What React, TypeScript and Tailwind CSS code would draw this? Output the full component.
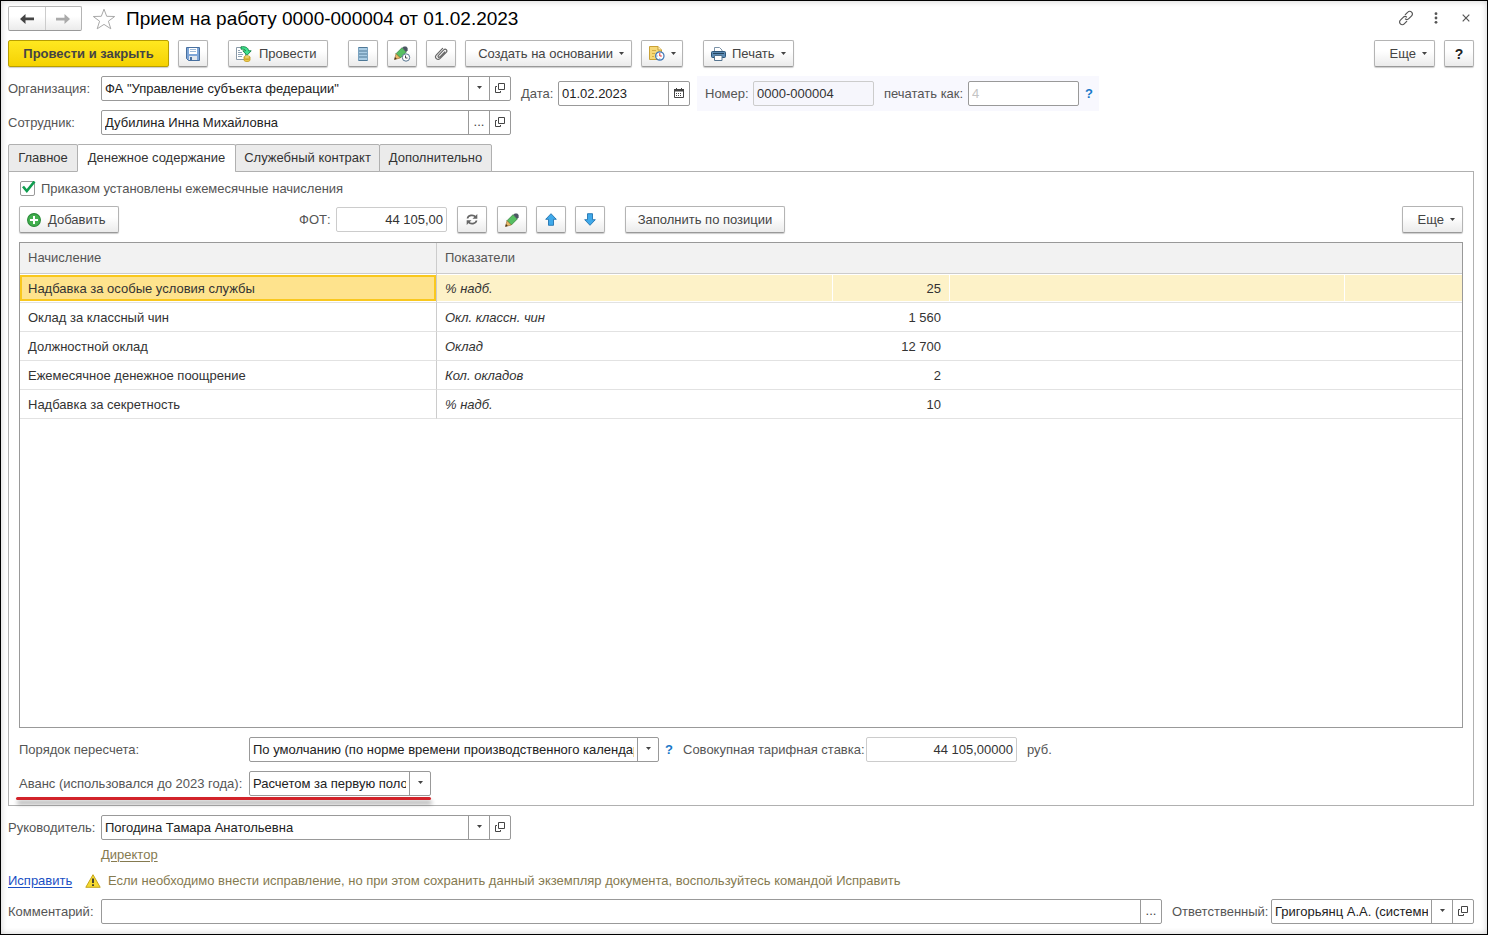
import { useState, type ReactNode } from "react";

const rows = [
  { name: "Надбавка за особые условия службы", indicator: "% надб.", value: "25" },
  { name: "Оклад за классный чин", indicator: "Окл. классн. чин", value: "1 560" },
  { name: "Должностной оклад", indicator: "Оклад", value: "12 700" },
  { name: "Ежемесячное денежное поощрение", indicator: "Кол. окладов", value: "2" },
  { name: "Надбавка за секретность", indicator: "% надб.", value: "10" },
];

const tabs = [
  { label: "Главное", width: "w-[70px]" },
  { label: "Денежное содержание", width: "w-[159px]" },
  { label: "Служебный контракт", width: "w-[145px]" },
  { label: "Дополнительно", width: "w-[113px]" },
];

/* Icons */

function Caret() {
  return (
    <svg width="5" height="3" viewBox="0 0 5 3" className="shrink-0">
      <path d="M0 0h5L2.5 3z" fill="#444" />
    </svg>
  );
}

function OpenIcon() {
  return (
    <svg width="10" height="10" viewBox="0 0 10 10" fill="none" stroke="#444">
      <path d="M3.5.5h6v6h-6z" />
      <path d="M2 3.5H.5v6h5V8" />
    </svg>
  );
}

function ArrowIcon({ color, flip }: { color: string; flip?: boolean }) {
  return (
    <svg width="14" height="10" viewBox="0 0 14 10" className={flip ? "rotate-180" : ""}>
      <path d="M5.5 0v3.6H14v2.6H5.5V10L0 5z" fill={color} />
    </svg>
  );
}

function StarIcon() {
  return (
    <svg width="24" height="22" viewBox="0 0 24 22" fill="#fff" stroke="#a9a9a9">
      <path d="M12 1.2l2.7 7.1 8 .2-6.3 4.7 2.4 7.6L12 16.4l-6.8 4.4 2.4-7.6L1.3 8.5l8-.2z" />
    </svg>
  );
}

function LinkIcon() {
  return (
    <svg width="16" height="16" viewBox="0 0 16 16" fill="none" stroke="#555" strokeWidth="1.2" strokeLinecap="round">
      <path d="M7.3 4.6l2.5-2.5a2.6 2.6 0 0 1 3.8 0 2.6 2.6 0 0 1 0 3.8L10.8 8.7a2.6 2.6 0 0 1-3.4.3" />
      <path d="M8.7 11.4l-2.5 2.5a2.6 2.6 0 0 1-3.8 0 2.6 2.6 0 0 1 0-3.8l2.8-2.8a2.6 2.6 0 0 1 3.4-.3" />
    </svg>
  );
}

function DotsIcon() {
  return (
    <svg width="4" height="12" viewBox="0 0 4 12" fill="#555">
      <circle cx="2" cy="1.7" r="1.4" />
      <circle cx="2" cy="6" r="1.4" />
      <circle cx="2" cy="10.3" r="1.4" />
    </svg>
  );
}

function CloseIcon() {
  return (
    <svg width="8" height="8" viewBox="0 0 8 8" stroke="#555" strokeWidth="1.2">
      <path d="M.7.7l6.6 6.6M7.3.7L.7 7.3" />
    </svg>
  );
}

function SaveIcon() {
  return (
    <svg width="14" height="14" viewBox="0 0 14 14">
      <path d="M.5.5h13v13h-11l-2-2z" fill="#7ea6d8" stroke="#476f9f" />
      <path d="M3 1h8v6H3z" fill="#fff" />
      <path d="M4 2.5h6M4 4.5h6" stroke="#9db9d8" />
      <path d="M3 9h8v4H3z" fill="#dfe6ee" />
      <path d="M4 10h2v3H4z" fill="#476f9f" />
    </svg>
  );
}

function PostIcon() {
  return (
    <svg width="16" height="16" viewBox="0 0 16 16">
      <path d="M.5 1.500h9v12h-9z" fill="#fff" stroke="#8a9aa8" />
      <path d="M2 4.500h2M2 6.500h4M2 8.500h5M2 10.500h4" stroke="#8fa3b5" />
      <path d="M5 .8c4.500-.6 7.200.8 7.600 4h2.600L11 9.300 6.800 4.800h2.700C9.200 3.400 7.800 3 5 3.200z" fill="#3fe08c" stroke="#128244" strokeWidth=".9" />
      <path d="M8 11v3c0 2 6 2 6 0v-3z" fill="#f2cf52" stroke="#c29a1d" strokeWidth=".8" />
      <ellipse cx="11" cy="11" rx="3" ry="1.2" fill="#fae48d" stroke="#c29a1d" strokeWidth=".8" />
      <path d="M8 12.700c.7 1.200 5.300 1.200 6 0" fill="none" stroke="#c29a1d" strokeWidth=".8" />
    </svg>
  );
}

function RegisterIcon() {
  return (
    <svg width="10" height="14" viewBox="0 0 10 14">
      <path d="M0 0h10v14H0z" fill="#a9cce4" />
      <path d="M0 .5h10M0 4h10M0 7h10M0 10h10M0 13.5h10" stroke="#4f7896" />
      <path d="M.5 0v14M9.5 0v14" stroke="#7ba3c0" />
    </svg>
  );
}

function PencilShape() {
  return (
    <>
      <path d="M8 1.700l4.300 4.300-6 6L2 7.700z" fill="#56bf62" stroke="#2c7a37" strokeWidth=".7" />
      <path d="M8.300 1.700L9.800.4h2.400l1.400 1.500v2.300l-1.500 1.700z" fill="#4b5563" />
      <path d="M2 7.700L6.300 12 .6 13.400z" fill="#e8b866" stroke="#94682a" strokeWidth=".6" />
      <path d="M.2 13.800l.8-2.700 1.900 1.900z" fill="#4a3520" />
    </>
  );
}

function PencilIcon() {
  return (
    <svg width="14" height="14" viewBox="0 0 14 14">
      <PencilShape />
    </svg>
  );
}

function PencilClockIcon() {
  return (
    <svg width="17" height="16" viewBox="0 0 17 16">
      <PencilShape />
      <circle cx="12" cy="11.500" r="3.700" fill="#fff" stroke="#55748f" />
      <path d="M11.500 9.500v2.500h2" fill="none" stroke="#444" />
    </svg>
  );
}

function ClipIcon() {
  return (
    <svg width="14" height="14" viewBox="0 0 14 14" fill="none" stroke="#666" strokeWidth="1.2" strokeLinecap="round">
      <path d="M10.8 5L6 9.800C4.700 11 3.300 9.600 4.500 8.300l5.200-5.400c1.900-1.800 4.200.5 2.500 2.400l-6 6.100c-2.700 2.600-6.300-.9-3.800-3.600L8.600 1.400" />
    </svg>
  );
}

function NoteClockIcon() {
  return (
    <svg width="16" height="15" viewBox="0 0 16 15">
      <path d="M.5.5H9L12.5 4v9.5H.5z" fill="#f6d877" stroke="#c9a136" />
      <path d="M9 .5V4h3.5" fill="#fff3c4" stroke="#c9a136" />
      <path d="M3 4.5h4M3 7.5h3M3 10.5h2" stroke="#d3ad46" />
      <circle cx="10.8" cy="10" r="4.2" fill="#fff" stroke="#3f76b5" strokeWidth="1.2" />
      <path d="M10.800 7v3h2" fill="none" stroke="#d33" />
      <path d="M10.800 12.500v1M7.500 10h1" stroke="#3f76b5" />
    </svg>
  );
}

function PrinterIcon() {
  return (
    <svg width="15" height="14" viewBox="0 0 15 14">
      <path d="M3.500 5V.5h5l2.500 2.500v2" fill="#fff" stroke="#7c93a8" />
      <rect x=".5" y="4.500" width="14" height="6" rx="1" fill="#5d8cb5" stroke="#2d5578" />
      <path d="M2 6.500h11" stroke="#24455f" />
      <path d="M3.500 8.500h7.500v5H3.500z" fill="#fff" stroke="#55748f" />
    </svg>
  );
}

function CalendarIcon() {
  return (
    <svg width="10" height="10" viewBox="0 0 10 10">
      <path d="M.5 1.500h9v8h-9z" fill="#fff" stroke="#444" />
      <path d="M0 1h10v2.500H0z" fill="#444" />
      <path d="M2.500 0v2M7.500 0v2" stroke="#444" />
      <path d="M2 5.500h6M2 7.500h6" stroke="#444" strokeDasharray="1 1" />
    </svg>
  );
}

function PlusIcon() {
  return (
    <svg width="14" height="14" viewBox="0 0 14 14">
      <circle cx="7" cy="7" r="6.4" fill="#43b04f" stroke="#2a8a38" strokeWidth="1.1" />
      <path d="M7 3v8M3 7h8" stroke="#fff" strokeWidth="2" />
    </svg>
  );
}

function RefreshIcon() {
  return (
    <svg width="12" height="11" viewBox="0 0 12 11" fill="none" stroke="#666" strokeWidth="1.7">
      <path d="M1.5 4.5C2 1 7.5.2 9.5 3" />
      <path d="M10.5 6.5C10 10 4.5 10.8 2.5 8" />
      <path d="M11.3 0v4.8H6.5z" fill="#666" stroke="none" />
      <path d="M.7 11V6.2h4.8z" fill="#666" stroke="none" />
    </svg>
  );
}

function MoveIcon({ down }: { down?: boolean }) {
  return (
    <svg width="12" height="13" viewBox="0 0 12 13" className={down ? "rotate-180" : ""}>
      <path d="M6 .7l5.300 5.600H8.500v6h-5v-6H.7z" fill="#3fa9ea" stroke="#2274b0" strokeWidth=".9" />
    </svg>
  );
}

function WarningIcon() {
  return (
    <svg width="16" height="14" viewBox="0 0 16 14">
      <path d="M8 .7l7.200 12.600H.8z" fill="#f5d92f" stroke="#c4a51c" strokeLinejoin="round" />
      <path d="M8 4.500V9M8 10.200v1.700" stroke="#333" strokeWidth="1.8" />
    </svg>
  );
}

/* Controls */

interface ButtonProps {
  width: string;
  label?: string;
  title?: string;
  icon?: ReactNode;
  menu?: boolean;
  primary?: boolean;
}

function Button({ width, label, title, icon, menu, primary }: ButtonProps) {
  const look = primary
    ? "border-[#b89f00] bg-linear-to-b from-[#ffe81f] to-[#f5d200] font-bold text-[#444]"
    : "border-[#b4b4b4] border-b-[#999] bg-linear-to-b from-white from-40% to-[#ebebeb] text-[#444]";
  // labelled buttons keep their content near the left edge, like the icon column of a menu
  const align = icon && label ? "justify-start pl-[7px]" : menu && !icon ? "justify-end pr-[7px]" : "justify-center";
  return (
    <button
      type="button"
      title={title}
      aria-label={label ?? title}
      className={`flex h-[27px] shrink-0 items-center rounded-xs border shadow-[0_1px_1px_#0003] whitespace-nowrap ${width} ${look} ${align} ${menu ? "gap-[6px]" : "gap-[7px]"}`}
    >
      {icon}
      {label}
      {menu && <Caret />}
    </button>
  );
}

function Cell({ title, children }: { title: string; children: ReactNode }) {
  return (
    <button type="button" aria-label={title} className="flex w-[21px] shrink-0 items-center justify-center border-l border-[#999] pb-[2px] text-[#444]">
      {children}
    </button>
  );
}

const frame = "flex h-[25px] min-w-0 rounded-xs border border-[#999] bg-white text-[#222]";

interface FieldProps {
  id: string;
  value: string;
  width: string;
  children?: ReactNode;
}

function SelectField({ id, value, width, children }: FieldProps) {
  return (
    <div className={`${frame} ${width}`}>
      <select id={id} className="min-w-0 flex-1 appearance-none overflow-hidden bg-transparent px-[3px] outline-none">
        <option>{value}</option>
      </select>
      <span className="pointer-events-none flex w-[21px] shrink-0 items-center justify-center border-l border-[#999] pb-[2px]">
        <Caret />
      </span>
      {children}
    </div>
  );
}

function TextField({ id, value, width, children }: FieldProps) {
  return (
    <div className={`${frame} ${width}`}>
      <input id={id} defaultValue={value} className="min-w-0 flex-1 bg-transparent px-[3px] outline-none" />
      {children}
    </div>
  );
}

function Hint() {
  return (
    <button type="button" aria-label="Подсказка" className="w-5 shrink-0 text-center font-bold text-[#1a78c8]">
      ?
    </button>
  );
}

function AccrualTable() {
  return (
    <div className="min-h-[200px] flex-1 border border-[#999] bg-white">
      <table className="w-full table-fixed border-separate border-spacing-0 text-left text-[#333]">
        <colgroup>
          <col className="w-[417px]" />
          <col />
          <col className="w-[117px]" />
          <col />
          <col className="w-[118px]" />
        </colgroup>
        <thead>
          <tr className="h-[31px] bg-[#f2f2f2] text-[#555]">
            <th className="border-r border-b border-[#ccc] px-2 font-normal">Начисление</th>
            <th colSpan={4} className="border-b border-[#ccc] px-2 font-normal">Показатели</th>
          </tr>
        </thead>
        <tbody>
          {rows.map((row, i) => {
            const active = i === 0;
            const fill = active ? "bg-[#fdf2c8]" : "";
            const cell = "border-b border-b-[#e2e2e2] p-0";
            const box = "flex h-[26px] items-center pt-[2px]";
            return (
              <tr key={row.name} className="h-[29px]">
                <td className={`${cell} border-r border-r-[#ccc]`}>
                  <div className={`${box} ${active ? "border-2 border-[#f9c81e] bg-[#fee38d] px-[6px]" : "px-2"}`}>
                    {row.name}
                  </div>
                </td>
                <td className={cell}>
                  <div className={`${box} px-2 italic ${fill}`}>{row.indicator}</div>
                </td>
                <td className={cell}>
                  <div className={`${box} justify-end pr-2 ${fill} ${active ? "border-l border-white" : ""}`}>{row.value}</div>
                </td>
                <td className={cell}>
                  <div className={`h-[26px] ${fill} ${active ? "border-l border-white" : ""}`} />
                </td>
                <td className={cell}>
                  <div className={`h-[26px] ${fill} ${active ? "border-l border-white" : ""}`} />
                </td>
              </tr>
            );
          })}
        </tbody>
      </table>
    </div>
  );
}

export default function App() {
  const [tab, setTab] = useState(1);
  const [monthly, setMonthly] = useState(true);

  return (
    <main className="flex min-h-screen flex-col border border-black bg-white pt-[5px] pr-[13px] pb-[10px] pl-[7px] font-['Liberation_Sans',Arial,sans-serif] text-[13px] leading-4 text-[#555] shadow-[inset_0_0_6px_#0003]">
      {/* Title */}
      <header className="flex h-[25px] items-center">
        <div className="flex h-[25px] w-[74px] rounded-xs border border-[#b4b4b4] border-b-[#999] bg-linear-to-b from-white from-40% to-[#ebebeb]">
          <button type="button" aria-label="Назад" className="flex flex-1 items-center justify-center border-r border-[#ccc]">
            <ArrowIcon color="#444" />
          </button>
          <button type="button" aria-label="Вперед" className="flex flex-1 items-center justify-center">
            <ArrowIcon color="#aaa" flip />
          </button>
        </div>
        <button type="button" aria-label="В избранное" className="ml-[10px]">
          <StarIcon />
        </button>
        <h1 className="ml-[10px] text-[19px] leading-6 text-black">Прием на работу 0000-000004 от 01.02.2023</h1>
        <div className="ml-auto flex items-center gap-[18px] pr-1 pb-[2px]">
          <button type="button" aria-label="Ссылка">
            <LinkIcon />
          </button>
          <button type="button" aria-label="Меню" className="pr-1 pl-[2px]">
            <DotsIcon />
          </button>
          <button type="button" aria-label="Закрыть" className="pl-[2px]">
            <CloseIcon />
          </button>
        </div>
      </header>

      {/* Command bar */}
      <div className="mt-[9px] flex items-center gap-[9px]">
        <Button primary width="w-[161px]" label="Провести и закрыть" />
        <Button width="w-[30px]" title="Записать" icon={<SaveIcon />} />
        <div className="mx-[11px] flex">
          <Button width="w-[100px]" label="Провести" icon={<PostIcon />} />
        </div>
        <Button width="w-[30px]" title="Движения документа" icon={<RegisterIcon />} />
        <Button width="w-[30px]" title="История изменений" icon={<PencilClockIcon />} />
        <Button width="w-[30px]" title="Файлы" icon={<ClipIcon />} />
        <Button menu width="w-[167px]" label="Создать на основании" />
        <Button menu width="w-[42px]" title="Напоминания" icon={<NoteClockIcon />} />
        <div className="ml-[11px] flex">
          <Button menu width="w-[91px]" label="Печать" icon={<PrinterIcon />} />
        </div>
        <div className="ml-auto flex gap-[9px]">
          <Button menu width="w-[61px]" label="Еще" />
          <button type="button" className="h-[27px] w-[30px] rounded-xs border border-[#b4b4b4] border-b-[#999] bg-linear-to-b from-white from-40% to-[#ebebeb] text-sm font-bold text-[#222] shadow-[0_1px_1px_#0003]">
            ?
          </button>
        </div>
      </div>

      {/* Document fields */}
      <div className="mt-[9px] flex items-start">
        <div className="grid grid-cols-[93px_410px] items-center gap-y-[9px]">
          <label htmlFor="org">Организация:</label>
          <SelectField id="org" width="w-full" value={'ФА "Управление субъекта федерации"'}>
            <Cell title="Открыть организацию"><OpenIcon /></Cell>
          </SelectField>
          <label htmlFor="employee">Сотрудник:</label>
          <TextField id="employee" width="w-full" value="Дубилина Инна Михайловна">
            <Cell title="Выбрать сотрудника">...</Cell>
            <Cell title="Открыть сотрудника"><OpenIcon /></Cell>
          </TextField>
        </div>
        <div className="ml-[10px] flex h-[35px] items-center">
          <label htmlFor="date" className="w-[37px]">Дата:</label>
          <TextField id="date" width="w-[132px]" value="01.02.2023">
            <Cell title="Календарь"><CalendarIcon /></Cell>
          </TextField>
        </div>
        <div className="ml-[7px] flex h-[35px] items-center bg-[#f8f8fe] pl-2">
          <label htmlFor="number" className="w-12">Номер:</label>
          <input id="number" readOnly value="0000-000004" className="h-[25px] w-[121px] rounded-xs border border-[#ccc] bg-[#f6f6fc] px-[3px] text-[#333] outline-none" />
          <label htmlFor="printAs" className="ml-[10px] w-[84px] whitespace-nowrap">печатать как:</label>
          <input id="printAs" placeholder="4" className="h-[25px] w-[111px] rounded-xs border border-[#999] bg-white px-[3px] outline-none placeholder:text-[#c4c4c4]" />
          <Hint />
        </div>
      </div>

      {/* Tabs */}
      <div role="tablist" className="z-10 mt-[9px] -mb-px flex">
        {tabs.map((t, i) => (
          <button
            key={t.label}
            type="button"
            role="tab"
            aria-selected={tab === i}
            onClick={() => setTab(i)}
            className={`-mr-px h-7 rounded-t-xs border border-[#b0b0b0] text-[#333] whitespace-nowrap ${t.width} ${tab === i ? "border-b-white bg-white" : "bg-[#ebebeb]"}`}
          >
            {t.label}
          </button>
        ))}
      </div>

      <section className="flex flex-1 flex-col border border-[#b0b0b0] px-[10px] pt-2 pb-[9px]">
        <label className="flex h-[17px] items-center gap-[5px]">
          <span className="grid">
            <input
              type="checkbox"
              checked={monthly}
              onChange={(e) => setMonthly(e.target.checked)}
              className="col-start-1 row-start-1 ml-px size-[15px] appearance-none rounded-xs border border-[#999] bg-white"
            />
            {monthly && (
              <svg width="17" height="15" viewBox="0 0 17 15" fill="none" className="pointer-events-none col-start-1 row-start-1">
                <path d="M4 5.500l3.800 4.500L15.500.5" stroke="#0f9d4f" strokeWidth="2.6" />
              </svg>
            )}
          </span>
          Приказом установлены ежемесячные начисления
        </label>

        <div className="mt-[9px] flex items-center">
          <Button width="w-[100px]" label="Добавить" icon={<PlusIcon />} />
          <label htmlFor="fot" className="ml-[180px] w-[37px]">ФОТ:</label>
          <input id="fot" readOnly value="44 105,00" className="h-[25px] w-[111px] rounded-xs border border-[#ccc] px-[3px] text-right text-[#333] outline-none" />
          <div className="mx-[10px] flex">
            <Button width="w-[30px]" title="Обновить" icon={<RefreshIcon />} />
          </div>
          <div className="flex gap-[9px]">
            <Button width="w-[30px]" title="Изменить" icon={<PencilIcon />} />
            <Button width="w-[30px]" title="Переместить вверх" icon={<MoveIcon />} />
            <Button width="w-[30px]" title="Переместить вниз" icon={<MoveIcon down />} />
          </div>
          <div className="ml-5 flex">
            <Button width="w-[160px]" label="Заполнить по позиции" />
          </div>
          <div className="ml-auto flex">
            <Button menu width="w-[61px]" label="Еще" />
          </div>
        </div>

        <div className="mt-[9px] flex flex-1 flex-col">
          <AccrualTable />
        </div>

        <div className="mt-[9px] flex items-center">
          <label htmlFor="recalc" className="w-[230px]">Порядок пересчета:</label>
          <SelectField id="recalc" width="w-[410px]" value="По умолчанию (по норме времени производственного календаря)" />
          <Hint />
          <label htmlFor="rate" className="ml-1 w-[183px] whitespace-nowrap">Совокупная тарифная ставка:</label>
          <input id="rate" readOnly value="44 105,00000" className="h-[25px] w-[151px] rounded-xs border border-[#ccc] px-[3px] text-right text-[#333] outline-none" />
          <span className="ml-[10px]">руб.</span>
        </div>
        <div className="relative mt-[9px] flex w-fit items-center">
          <label htmlFor="advance" className="w-[230px] whitespace-nowrap">Аванс (использовался до 2023 года):</label>
          <SelectField id="advance" width="w-[182px]" value="Расчетом за первую половину месяца" />
          <div className="absolute top-full right-0 -left-[3px] mt-px h-[3px] rounded-full bg-[#d2232a] shadow-[1px_4px_4px_#0006]" />
        </div>
      </section>

      {/* Signature and comment */}
      <div className="mt-[9px] flex items-center">
        <label htmlFor="head" className="w-[93px]">Руководитель:</label>
        <SelectField id="head" width="w-[410px]" value="Погодина Тамара Анатольевна">
          <Cell title="Открыть руководителя"><OpenIcon /></Cell>
        </SelectField>
      </div>
      <div className="mt-[7px] pl-[93px]">
        <a href="#position" className="text-[#857a50] underline underline-offset-2">Директор</a>
      </div>
      <div className="mt-[10px] flex items-center">
        <a href="#fix" className="w-[77px] text-[#1a4fc4] underline underline-offset-2">Исправить</a>
        <WarningIcon />
        <span className="ml-[7px] text-[#857a50]">
          Если необходимо внести исправление, но при этом сохранить данный экземпляр документа, воспользуйтесь командой Исправить
        </span>
      </div>
      <footer className="mt-[10px] flex items-center">
        <label htmlFor="comment" className="w-[93px] shrink-0">Комментарий:</label>
        <TextField id="comment" width="flex-1" value="">
          <Cell title="Редактировать комментарий">...</Cell>
        </TextField>
        <label htmlFor="responsible" className="ml-[10px] w-[99px] shrink-0">Ответственный:</label>
        <SelectField id="responsible" width="w-[203px]" value="Григорьянц А.А. (системный администратор)">
          <Cell title="Открыть ответственного"><OpenIcon /></Cell>
        </SelectField>
      </footer>
    </main>
  );
}
